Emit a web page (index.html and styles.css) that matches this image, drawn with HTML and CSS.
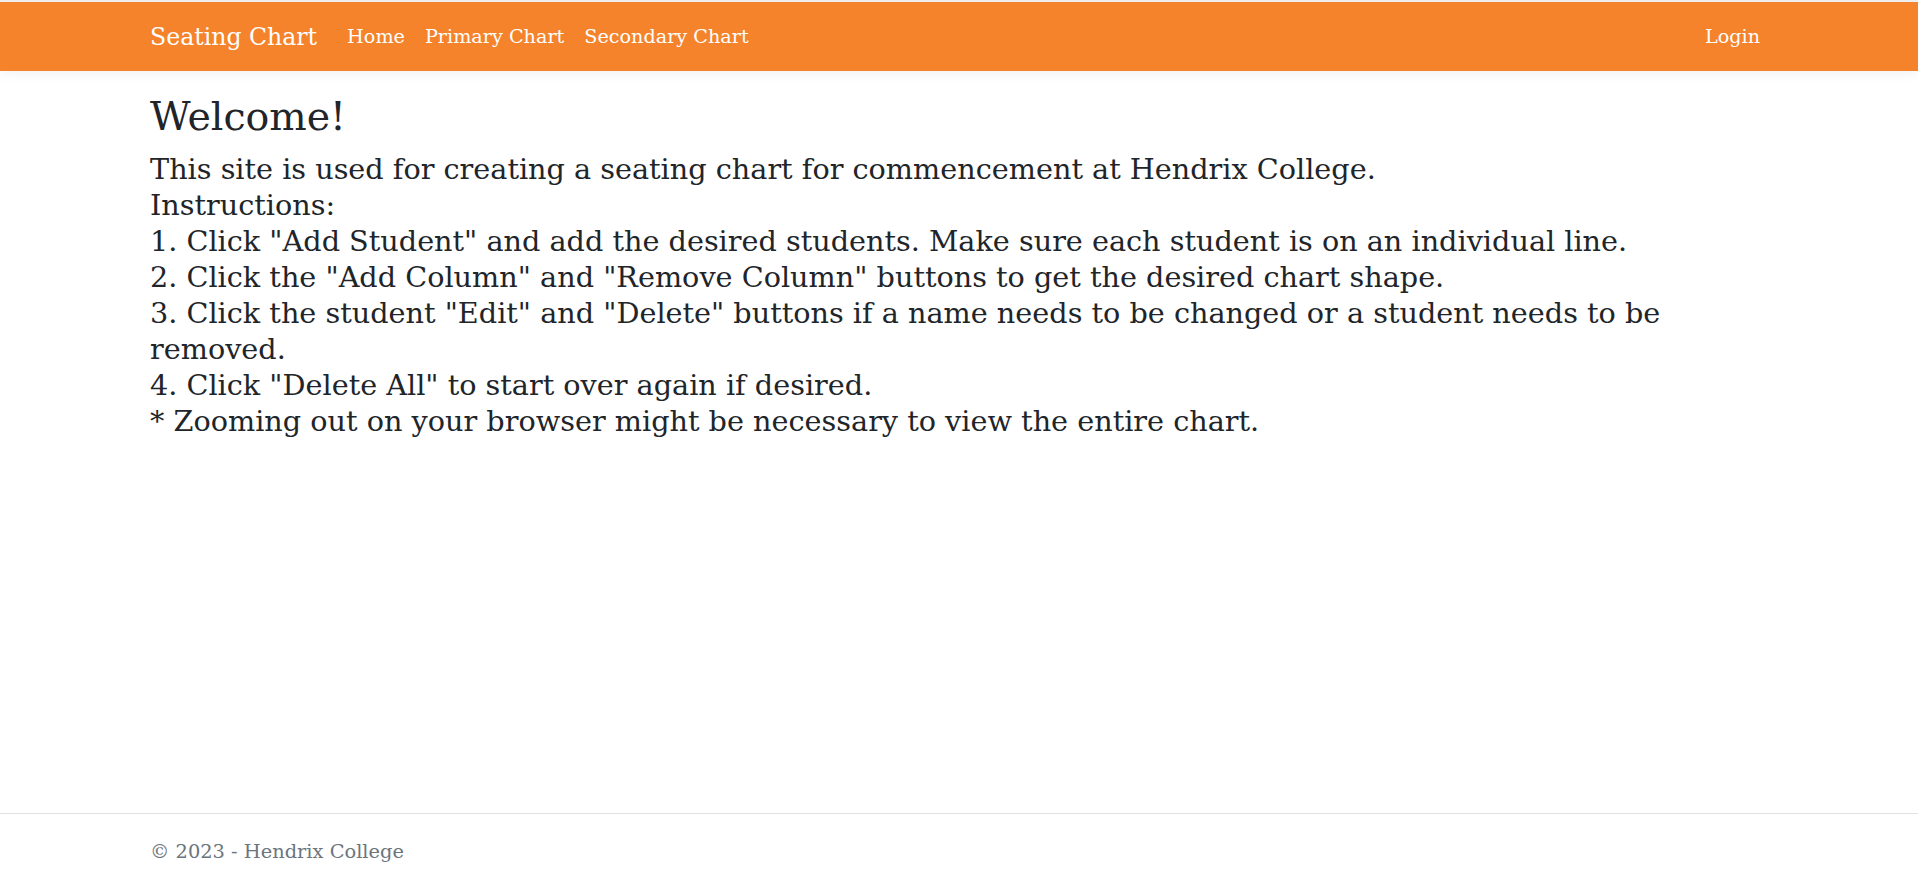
FILE: index.html
```html
<!DOCTYPE html>
<html lang="en">
<head>
<meta charset="utf-8">
<title>Home - Seating Chart</title>
<link rel="stylesheet" href="styles.css">
</head>
<body>
<div class="page">
  <header class="navbar">
    <div class="nav-inner">
      <a class="brand" href="#">Seating Chart</a>
      <nav class="nav-links">
        <a class="nav-link" href="#">Home</a>
        <a class="nav-link" href="#">Primary Chart</a>
        <a class="nav-link" href="#">Secondary Chart</a>
      </nav>
      <nav class="nav-right">
        <a class="nav-link" href="#">Login</a>
      </nav>
    </div>
  </header>
  <main class="content">
    <h1 class="title">Welcome!</h1>
    <p class="intro">This site is used for creating a seating chart for commencement at Hendrix College.<br>
Instructions:<br>
1. Click "Add Student" and add the desired students. Make sure each student is on an individual line.<br>
2. Click the "Add Column" and "Remove Column" buttons to get the desired chart shape.<br>
3. Click the student "Edit" and "Delete" buttons if a name needs to be changed or a student needs to be removed.<br>
4. Click "Delete All" to start over again if desired.<br>
* Zooming out on your browser might be necessary to view the entire chart.</p>
  </main>
  <footer class="footer">
    <div class="footer-inner">&copy; 2023 - Hendrix College</div>
  </footer>
</div>
</body>
</html>
```
FILE: styles.css
```css
html, body {
  margin: 0;
  padding: 0;
}
body {
  font-family: "DejaVu Serif", "Liberation Serif", serif;
  color: #212529;
  background: #ffffff;
}
.page {
  min-height: 100vh;
  display: flex;
  flex-direction: column;
}
.navbar {
  border-top: 2px solid #eeeeee;
  background: #f5832b;
  box-shadow: 0 4px 10px rgba(0, 0, 0, 0.05);
}
.nav-inner {
  height: 69px;
  padding: 0 150px;
  display: flex;
  align-items: center;
}
.brand {
  color: #ffffff;
  text-decoration: none;
  font-size: 23.6px;
  margin-right: 20px;
}
.nav-links {
  display: flex;
  flex: 1;
}
.nav-right {
  display: flex;
}
.nav-link {
  color: #ffffff;
  text-decoration: none;
  font-size: 19.2px;
  padding: 0 10px;
}
.nav-right .nav-link {
  padding-right: 8px;
}
.content {
  flex: 1;
  padding: 0 150px;
}
.title {
  margin: 22px 0 0;
  font-weight: 400;
  font-size: 39.5px;
  line-height: 1.2;
}
.intro {
  margin: 11px 0 0;
  font-size: 28.7px;
  line-height: 36px;
}
.footer {
  border-top: 1px solid #e1e1e1;
  height: 72px;
}
.footer-inner {
  padding: 24px 150px 0;
  line-height: 28px;
  font-size: 19.4px;
  color: #6c757d;
}
```
